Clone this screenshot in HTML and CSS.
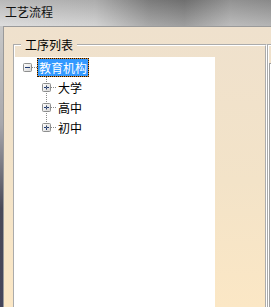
FILE: index.html
```html
<!DOCTYPE html>
<html lang="zh">
<head>
    <meta charset="UTF-8">
    <title>工艺流程</title>
    <link rel="stylesheet" href="styles.css">
</head>
<body>
    <div class="window">
        <div class="titlebar">工艺流程</div>
        <div class="frame">
            <div class="edge"></div>
            <div class="client">
                <fieldset class="group">
                    <legend>工序列表</legend>
                    <div class="tree">
                        <div class="node root">
                            <svg class="expander" width="9" height="9">
                                <defs>
                                    <linearGradient id="boxfill" x1="0" y1="0" x2="1" y2="1">
                                        <stop offset="0" stop-color="#ffffff"/>
                                        <stop offset="1" stop-color="#d6d6d6"/>
                                    </linearGradient>
                                </defs>
                                <rect x="0.5" y="0.5" width="8" height="8" rx="1" fill="url(#boxfill)" stroke="#8e8f8f"/>
                                <path d="M2 4.5h5" stroke="#1f3a73"/>
                            </svg>
                            <span class="dots"></span>
                            <span class="label selected">教育机构</span>
                        </div>
                        <ul class="children">
                            <li class="node">
                                <svg class="expander" width="9" height="9">
                                    <rect x="0.5" y="0.5" width="8" height="8" rx="1" fill="url(#boxfill)" stroke="#8e8f8f"/>
                                    <path d="M2 4.5h5M4.5 2v5" stroke="#1f3a73"/>
                                </svg>
                                <span class="dots"></span>
                                <span class="label">大学</span>
                            </li>
                            <li class="node">
                                <svg class="expander" width="9" height="9">
                                    <rect x="0.5" y="0.5" width="8" height="8" rx="1" fill="url(#boxfill)" stroke="#8e8f8f"/>
                                    <path d="M2 4.5h5M4.5 2v5" stroke="#1f3a73"/>
                                </svg>
                                <span class="dots"></span>
                                <span class="label">高中</span>
                            </li>
                            <li class="node">
                                <svg class="expander" width="9" height="9">
                                    <rect x="0.5" y="0.5" width="8" height="8" rx="1" fill="url(#boxfill)" stroke="#8e8f8f"/>
                                    <path d="M2 4.5h5M4.5 2v5" stroke="#1f3a73"/>
                                </svg>
                                <span class="dots"></span>
                                <span class="label">初中</span>
                            </li>
                        </ul>
                    </div>
                </fieldset>
                <fieldset class="group side">
                    <div class="panel"></div>
                </fieldset>
            </div>
        </div>
    </div>
</body>
</html>
```

FILE: styles.css
```css
* {
    box-sizing: border-box;
}
html, body {
    margin: 0;
}
body {
    width: 271px;
    height: 307px;
    overflow: hidden;
    font-family: "Noto Sans CJK SC", "Noto Sans", sans-serif;
    font-size: 12px;
    background: #4a4a58;
}
.window {
    display: flex;
    flex-direction: column;
    height: 307px;
}
.titlebar {
    flex: none;
    height: 26px;
    padding: 4px 0 0 5px;
    line-height: 16px;
    color: #111;
    background:
        linear-gradient(rgba(0, 0, 0, 0.12), rgba(255, 255, 255, 0.25)),
        linear-gradient(90deg, #d2d2d2 0%, #c4c4c4 35%, #8c8c8c 55%, #7e7e7e 68%, #a6a6a6 85%, #9c9c9c 100%);
}
.frame {
    flex: 1;
    display: flex;
    min-height: 0;
}
.edge {
    width: 3px;
    background: linear-gradient(#c8c8c8, #a8a8ac 35%, #4a4a58 65%, #45455a);
}
.client {
    flex: 1;
    display: flex;
    align-items: flex-start;
    overflow: hidden;
    border-left: 1px solid #9a9a9a;
    border-top: 1px solid #9a9a9a;
    background: linear-gradient(#efe1cd, #f3e3c8 55%, #fbe7c5);
}
.group {
    flex: none;
    width: 254px;
    height: 300px;
    min-width: 0;
    margin: 11px 0 0 9px;
    padding: 0;
    border: 2px groove #fff;
}
.group legend {
    margin-left: 6px;
    padding: 0 4px;
    line-height: 14px;
    color: #000;
}
.group.side {
    width: 40px;
    margin: 17px 0 0 0;
}
.panel {
    width: 60px;
    height: 260px;
    margin-top: 17px;
    border-top: 1px solid #a0a0a0;
    border-left: 1px solid #a0a0a0;
    background: #fff;
}
.tree {
    width: 200px;
    height: 260px;
    margin-top: 5px;
    background: #fff;
}
.node {
    display: flex;
    align-items: center;
    height: 20px;
}
.root {
    padding-left: 8px;
}
.expander {
    flex: none;
    display: block;
}
.dots {
    width: 5px;
    height: 1px;
    border-top: 1px dotted #8a8a8a;
}
.label {
    height: 19px;
    padding: 0 1px;
    line-height: 17px;
    border: 1px solid transparent;
    color: #000;
    white-space: nowrap;
}
.label.selected {
    border: 1px dotted #111;
    color: #fff;
    background: linear-gradient(#3399ff, #3399ff) padding-box, #e0892b border-box;
}
.children {
    position: relative;
    margin: 0;
    padding: 0;
    list-style: none;
}
.children::before {
    content: "";
    position: absolute;
    left: 31px;
    top: 0;
    height: 51px;
    border-left: 1px dotted #8a8a8a;
}
.children .node {
    padding-left: 27px;
}
```
